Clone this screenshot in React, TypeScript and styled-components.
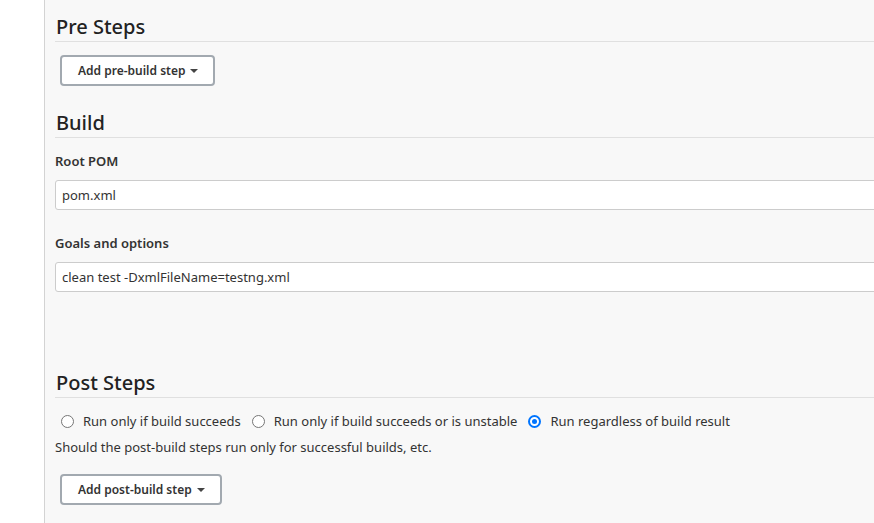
import React from "react";
import styled, { createGlobalStyle } from "styled-components";

const Global = createGlobalStyle`
  html, body { margin: 0; padding: 0; background: #fff; overflow: hidden; }
  body { font-family: "Noto Sans", "Open Sans", sans-serif; color: #333; }
`;

const Page = styled.div`
  display: flex;
  width: 874px;
  height: 523px;
  overflow: hidden;
`;

const SideGap = styled.div`
  width: 44px;
  flex: none;
  background: #fff;
  border-right: 1px solid #d3d3d3;
`;

const Main = styled.div`
  flex: 1;
  background: #f8f8f8;
  padding: 14px 0 0 10px;
  min-width: 0;
`;

const Section = styled.section<{ $gap?: number }>`
  margin-top: ${(p) => p.$gap ?? 0}px;
`;

const SectionTitle = styled.h2`
  margin: 0;
  font-size: 20px;
  font-weight: 500;
  color: #222;
  line-height: 26px;
  padding-bottom: 1px;
  border-bottom: 1px solid #e0e0e0;
  padding-left: 1px;
`;

const DropButton = styled.button<{ $top?: number }>`
  display: inline-flex;
  align-items: center;
  gap: 5px;
  height: 31px;
  margin: ${(p) => p.$top ?? 13}px 0 0 5px;
  padding: 0 15px 0 16px;
  background: #fff;
  border: 2px solid #a2a9b0;
  border-radius: 4px;
  font-family: inherit;
  font-size: 12px;
  font-weight: 600;
  color: #333;
`;

const Caret = styled.span`
  width: 0;
  height: 0;
  border-left: 4px solid transparent;
  border-right: 4px solid transparent;
  border-top: 4px solid #444;
`;

const Label = styled.div<{ $top?: number }>`
  font-size: 13px;
  font-weight: 600;
  color: #333;
  margin-top: ${(p) => p.$top ?? 14}px;
  line-height: 18px;
`;

const TextInput = styled.input`
  display: block;
  box-sizing: border-box;
  width: 900px;
  height: 30px;
  margin-top: 10px;
  padding: 0 6px;
  background: #fff;
  border: 1px solid #ccc;
  border-radius: 3px;
  font-family: inherit;
  font-size: 13px;
  color: #333;
`;

const RadioRow = styled.div`
  display: flex;
  align-items: center;
  margin-top: 14px;
  font-size: 13px;
  color: #333;
`;

const RadioLabel = styled.label`
  display: inline-flex;
  align-items: center;
  gap: 9px;
  margin-right: 5px;
`;

const Radio = styled.span<{ $checked?: boolean }>`
  box-sizing: border-box;
  width: 13px;
  height: 13px;
  border-radius: 50%;
  margin-left: 6px;
  border: 1px solid #767676;
  background: #fff;
  display: inline-flex;
  align-items: center;
  justify-content: center;
  ${(p) =>
    p.$checked &&
    `border: 2px solid #0075ff; &::after { content: ""; width: 5px; height: 5px; border-radius: 50%; background: #0075ff; }`}
`;

const Help = styled.div`
  margin-top: 8px;
  font-size: 13px;
  color: #333;
`;

export default function App() {
  return (
    <Page>
      <Global />
      <SideGap />
      <Main>
        <Section>
          <SectionTitle>Pre Steps</SectionTitle>
          <DropButton>
            Add pre-build step <Caret />
          </DropButton>
        </Section>
        <Section $gap={24}>
          <SectionTitle>Build</SectionTitle>
          <Label>Root POM</Label>
          <TextInput defaultValue="pom.xml" />
          <Label $top={24}>Goals and options</Label>
          <TextInput defaultValue="clean test -DxmlFileName=testng.xml" />
        </Section>
        <Section $gap={78}>
          <SectionTitle>Post Steps</SectionTitle>
          <RadioRow>
            <RadioLabel>
              <Radio />
              Run only if build succeeds
            </RadioLabel>
            <RadioLabel>
              <Radio />
              Run only if build succeeds or is unstable
            </RadioLabel>
            <RadioLabel>
              <Radio $checked />
              Run regardless of build result
            </RadioLabel>
          </RadioRow>
          <Help>Should the post-build steps run only for successful builds, etc.</Help>
          <DropButton $top={18}>
            Add post-build step <Caret />
          </DropButton>
        </Section>
      </Main>
    </Page>
  );
}
